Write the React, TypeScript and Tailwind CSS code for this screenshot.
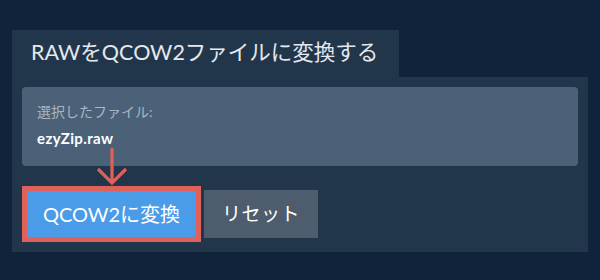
import React from "react";

const font = { fontFamily: 'Lato, "Noto Sans CJK JP", sans-serif' };

const App: React.FC = () => {
	return (
		<div className="w-full h-[280px] bg-[#10233a] pt-[30px] pl-[12px]" style={font}>
			<div className="w-[387px] h-[47px] bg-[#22364b] pl-[19px] pt-[8px]">
				<h1 className="text-[21.5px] leading-[28px] text-[#e4e9ee]">
					RAWをQCOW2ファイルに変換する
				</h1>
			</div>
			<div className="relative w-[576px] h-[175px] bg-[#22364b] px-[10px] pt-[10px]">
				<div className="h-[79px] rounded-[4px] bg-[#4b6178] pl-[15px] pt-[16px]">
					<p className="text-[14px] leading-[18px] text-[#aab6c2]">選択したファイル:</p>
					<p className="mt-[8px] text-[15px] leading-[18px] font-bold tracking-[0.4px] text-white">
						ezyZip.raw
					</p>
				</div>
				<svg
					className="absolute left-[84px] top-[70px]"
					width="32"
					height="40"
					viewBox="0 0 32 40"
					fill="none"
				>
					<path
						d="M16 1 V35 M2 22 L16 36 L30 22"
						stroke="#e0605a"
						strokeWidth="3.2"
					/>
				</svg>
				<div className="mt-[20px] flex items-center gap-[3px]">
					<div className="border-[5px] border-[#e0605a]">
						<button className="w-[169px] h-[46px] bg-[#4a9be8] text-white text-[20px]">
							QCOW2に変換
						</button>
					</div>
					<button className="w-[114px] h-[48px] bg-[#4d5d6d] text-white text-[19px] tracking-[0.5px]">
						リセット
					</button>
				</div>
			</div>
		</div>
	);
};

export default App;
